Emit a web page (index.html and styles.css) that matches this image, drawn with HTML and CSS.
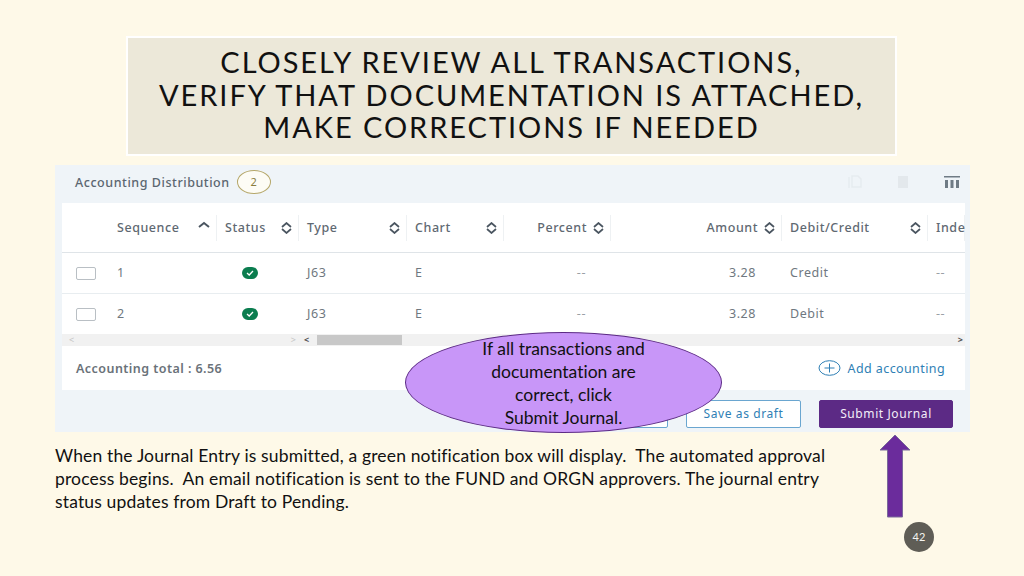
FILE: index.html
```html
<!DOCTYPE html>
<html lang="en">

<head>
  <meta charset="UTF-8">
  <meta name="viewport" content="width=device-width, initial-scale=1.0">
  <title>Closely review all transactions</title>
  <link rel="stylesheet" href="styles.css">
</head>

<body>
  <div class="slide">
    <h1 class="tit">CLOSELY REVIEW ALL TRANSACTIONS,<br>VERIFY THAT DOCUMENTATION IS ATTACHED,<br>MAKE CORRECTIONS IF NEEDED</h1>

    <div class="panel">
      <div class="panel-head">
        <span class="panel-name">Accounting Distribution</span>
        <span class="count">2</span>
        <div class="tools">
          <svg class="tool" width="14" height="14" viewBox="0 0 14 14" fill="none" stroke="#e6ebef" stroke-width="1.5"><path d="M1 2v11M4 1h6l3 3v8H4z"/></svg>
          <svg class="tool" width="12" height="14" viewBox="0 0 12 14" fill="#e3e8ec"><path d="M1 1h10v12H1z"/></svg>
          <svg class="tool" width="16" height="12" viewBox="0 0 16 12" fill="#6f7b85"><path d="M0 0h16v1.5H0zM1 4h3v8H1zM6.500 4h3v8h-3zM12 4h3v8h-3z"/></svg>
        </div>
      </div>

      <div class="card">
        <div class="row head">
          <div class="cell"></div>
          <div class="cell">Sequence<svg class="sort" width="12" height="7" viewBox="0 0 12 7" fill="none" stroke="#4a5560" stroke-width="2"><path d="M1 6l5-4 5 4"/></svg></div>
          <div class="cell">Status<svg class="sort" width="11" height="12" viewBox="0 0 11 12" fill="none" stroke="#4a5560" stroke-width="1.700"><path d="M1 5l4.500-4 4.500 4M1 7l4.500 4 4.500-4"/></svg></div>
          <div class="cell">Type<svg class="sort" width="11" height="12" viewBox="0 0 11 12" fill="none" stroke="#4a5560" stroke-width="1.700"><path d="M1 5l4.500-4 4.500 4M1 7l4.500 4 4.500-4"/></svg></div>
          <div class="cell">Chart<svg class="sort" width="11" height="12" viewBox="0 0 11 12" fill="none" stroke="#4a5560" stroke-width="1.700"><path d="M1 5l4.500-4 4.500 4M1 7l4.500 4 4.500-4"/></svg></div>
          <div class="cell pct">Percent<svg class="sort near" width="11" height="12" viewBox="0 0 11 12" fill="none" stroke="#4a5560" stroke-width="1.700"><path d="M1 5l4.500-4 4.500 4M1 7l4.500 4 4.500-4"/></svg></div>
          <div class="cell amt">Amount<svg class="sort near" width="11" height="12" viewBox="0 0 11 12" fill="none" stroke="#4a5560" stroke-width="1.700"><path d="M1 5l4.500-4 4.500 4M1 7l4.500 4 4.500-4"/></svg></div>
          <div class="cell">Debit/Credit<svg class="sort" width="11" height="12" viewBox="0 0 11 12" fill="none" stroke="#4a5560" stroke-width="1.700"><path d="M1 5l4.500-4 4.500 4M1 7l4.500 4 4.500-4"/></svg></div>
          <div class="cell last">Index</div>
        </div>

        <div class="row">
          <div class="cell chk"><span class="box"></span></div>
          <div class="cell">1</div>
          <div class="cell ok"><svg width="16" height="12" viewBox="0 0 16 12"><rect width="16" height="12" rx="6" fill="#0b7d4f"/><path d="M5 6l2.200 2 3.800-4" fill="none" stroke="#fff" stroke-width="1.300"/></svg></div>
          <div class="cell">J63</div>
          <div class="cell">E</div>
          <div class="cell pct-val">--</div>
          <div class="cell amt-val">3.28</div>
          <div class="cell">Credit</div>
          <div class="cell last">--</div>
        </div>

        <div class="row">
          <div class="cell chk"><span class="box"></span></div>
          <div class="cell">2</div>
          <div class="cell ok"><svg width="16" height="12" viewBox="0 0 16 12"><rect width="16" height="12" rx="6" fill="#0b7d4f"/><path d="M5 6l2.200 2 3.800-4" fill="none" stroke="#fff" stroke-width="1.300"/></svg></div>
          <div class="cell">J63</div>
          <div class="cell">E</div>
          <div class="cell pct-val">--</div>
          <div class="cell amt-val">3.28</div>
          <div class="cell">Debit</div>
          <div class="cell last">--</div>
        </div>

        <div class="scroll">
          <div class="scroll-left"><span class="arr pale">&lt;</span><span class="arr pale">&gt;</span></div>
          <span class="arr">&lt;</span>
          <span class="thumb"></span>
          <span class="arr end">&gt;</span>
        </div>

        <div class="foot">
          <span class="total">Accounting total : 6.56</span>
          <span class="add"><svg width="23" height="16" viewBox="0 0 23 16" fill="none" stroke="#2f7fb5" stroke-width="1"><ellipse cx="11.500" cy="8" rx="10.500" ry="7.300"/><path d="M6.500 8h10M11.500 3.500v9"/></svg>Add accounting</span>
        </div>
      </div>

      <div class="btns">
        <span class="btn back"></span>
        <span class="btn">Save as draft</span>
        <span class="btn main">Submit Journal</span>
      </div>
    </div>

    <p class="note">When the Journal Entry is submitted, a green notification box will display.&nbsp; The automated approval<br>process begins.&nbsp; An email notification is sent to the FUND and ORGN approvers. The journal entry<br>status updates from Draft to Pending.</p>

    <div class="oval">If all transactions and<br>documentation are<br>correct, click<br>Submit Journal.</div>

    <svg class="arrow" width="32" height="84" viewBox="0 0 32 84"><path d="M16 1L31 16H23.500V83H8.500V16H1z" fill="#6b2c9c" stroke="#7a6a9a" stroke-width="1"/></svg>
    <div class="num">42</div>
  </div>
</body>

</html>
```

FILE: styles.css
```css
body,
div,
span,
h1,
p {
  margin: 0;
  padding: 0;
}

body {
  background-color: #fef9e8;
  font-family: "Noto Sans", sans-serif;
}

.slide {
  width: 1024px;
  height: 576px;
  position: relative;
  overflow: hidden;
  padding-top: 36px;
  box-sizing: border-box;
}

.tit {
  width: 771px;
  height: 120px;
  box-sizing: border-box;
  margin-left: 126px;
  padding-top: 8px;
  background-color: #ece8d9;
  border: 2px solid #fff;
  text-align: center;
  font-family: Lato, sans-serif;
  font-weight: 400;
  font-size: 29px;
  line-height: 32.500px;
  letter-spacing: 1.950px;
  font-variant-ligatures: none;
  color: #111;
}

.panel {
  width: 915px;
  height: 267px;
  margin: 9px 0 0 55px;
  background-color: #eff4f8;
  display: flex;
  flex-direction: column;
}

.panel-head {
  height: 34px;
  margin-bottom: 4px;
  display: flex;
  align-items: center;
  padding: 0 7px 0 20px;
  color: #5b6670;
}

.panel-name {
  font-size: 12.500px;
  font-weight: 500;
  letter-spacing: 0.550px;
}

.count {
  width: 32px;
  height: 22px;
  margin-left: 7px;
  border: 1px solid #b5a76a;
  border-radius: 50%;
  background-color: #fdfcf5;
  color: #8a7d3e;
  font-size: 11px;
  line-height: 22px;
  text-align: center;
}

.tools {
  margin-left: auto;
  display: flex;
  align-items: center;
  gap: 35px;
  padding-right: 3px;
}

.card {
  width: 903px;
  height: 187px;
  margin-left: 7px;
  background-color: #fff;
  display: flex;
  flex-direction: column;
  overflow: hidden;
}

.row {
  height: 41px;
  flex: none;
  display: grid;
  grid-template-columns: 48px 107px 82px 108px 97px 107px 171px 146px 37px;
  align-items: center;
  border-bottom: 1px solid #e8edf0;
  box-sizing: border-box;
  font-size: 12.500px;
  letter-spacing: 0.550px;
  color: #6f7880;
}

.head {
  height: 50px;
  border-bottom: 1px solid #dfe4e8;
  color: #5f6972;
  font-weight: 500;
}

.cell {
  display: flex;
  align-items: center;
  padding: 0 6px 2px 8px;
  white-space: nowrap;
  height: 100%;
  box-sizing: border-box;
}

.head .cell {
  height: 26px;
  padding-bottom: 0;
  position: relative;
  border-right: 1px solid #eef1f3;
}

.head .cell:first-child {
  border-right: 0;
}

.chk {
  padding-bottom: 0;
}

.sort {
  margin-left: auto;
  flex: none;
}

.sort.near {
  margin-left: 6px;
}

.row .cell:nth-child(2) {
  padding-left: 7px;
}

.head .cell:nth-child(2) .sort {
  margin-bottom: 6px;
}

.pct {
  justify-content: flex-end;
}

.amt {
  justify-content: flex-end;
}

.pct-val {
  justify-content: flex-end;
  padding-right: 25px;
  color: #9aa1a6;
}

.amt-val {
  justify-content: flex-end;
  padding-right: 26px;
}

.ok {
  padding-left: 25px;
  padding-bottom: 0;
}

.last {
  padding-right: 0;
  border-right: 0;
}

.row:not(.head) .last {
  color: #9aa1a6;
}

.box {
  width: 18px;
  height: 11px;
  margin-left: 6px;
  border: 1px solid #b9bfc4;
  border-radius: 2px;
}

.scroll {
  height: 12px;
  margin-top: -1px;
  background-color: #f1f1f1;
  display: flex;
  align-items: center;
  flex: none;
}

.scroll-left {
  width: 238px;
  padding: 0 4px 0 3px;
  box-sizing: border-box;
  display: flex;
  justify-content: space-between;
}

.arr {
  font-size: 9px;
  font-weight: 700;
  line-height: 12px;
  color: #505050;
  margin-left: 4px;
}

.arr.pale {
  color: #c4c4c4;
  font-weight: 400;
}

.arr.end {
  margin-left: auto;
  margin-right: 2px;
}

.thumb {
  width: 85px;
  height: 10px;
  margin-left: 8px;
  background-color: #c8c8c8;
}

.foot {
  flex: 1;
  display: flex;
  align-items: center;
  justify-content: space-between;
  padding: 0 20px 0 14px;
}

.total {
  font-size: 12.500px;
  font-weight: 600;
  letter-spacing: 0.450px;
  color: #6a7279;
}

.add {
  display: flex;
  align-items: center;
  gap: 7px;
  font-size: 12.500px;
  letter-spacing: 0.400px;
  color: #2f7fb5;
}

.btns {
  display: flex;
  justify-content: flex-end;
  gap: 18px;
  padding: 10px 17px 0 0;
}

.btn {
  width: 115px;
  height: 28px;
  box-sizing: border-box;
  background-color: #fff;
  border: 1px solid #6aa6d0;
  border-radius: 2px;
  color: #2f7fb5;
  font-size: 12px;
  letter-spacing: 0.600px;
  line-height: 26px;
  text-align: center;
}

.btn.back {
  width: 70px;
}

.btn.main {
  width: 134px;
  background-color: #5c2a85;
  border-color: #5c2a85;
  color: #f3edf8;
}

.note {
  margin: 12px 0 0 55px;
  font-family: Lato, sans-serif;
  font-size: 17.500px;
  line-height: 23px;
  letter-spacing: 0.150px;
  font-variant-ligatures: none;
  color: #111;
}

/* over the panel */
.oval {
  position: absolute;
  left: 405px;
  top: 332px;
  width: 317px;
  height: 101px;
  box-sizing: border-box;
  border: 1px solid #5c2a85;
  border-radius: 50%;
  background-color: #c896f8;
  text-align: center;
  font-family: Lato, sans-serif;
  font-size: 17.500px;
  line-height: 23px;
  font-variant-ligatures: none;
  color: #111;
  padding-top: 4px;
}

.arrow {
  position: absolute;
  left: 879px;
  top: 434px;
}

.num {
  position: absolute;
  left: 904px;
  top: 522px;
  width: 30px;
  height: 30px;
  border-radius: 50%;
  background-color: #5f5d56;
  color: #f4f4f0;
  font-family: Lato, sans-serif;
  font-size: 11px;
  line-height: 30px;
  text-align: center;
}
```
